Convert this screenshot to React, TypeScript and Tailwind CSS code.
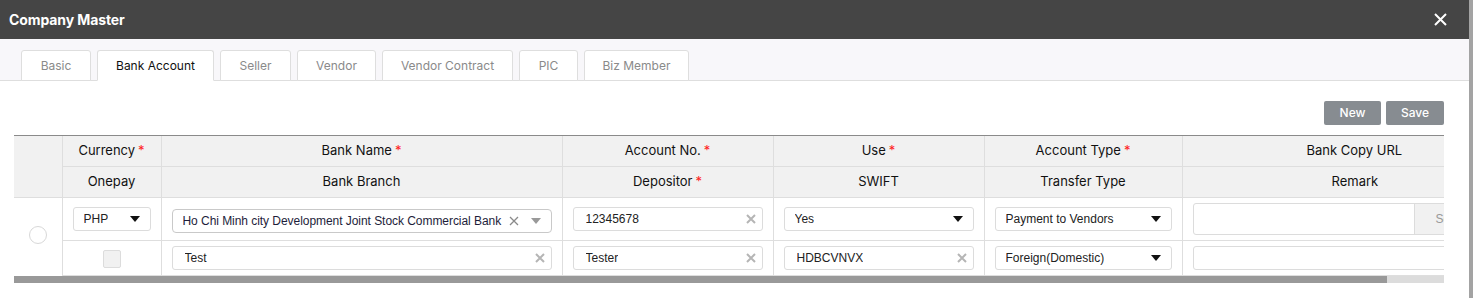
import React from "react";

const tabs = [
  { label: "Basic", w: "w-[70px]" },
  { label: "Bank Account", w: "w-[117px]", active: true },
  { label: "Seller", w: "w-[71px]" },
  { label: "Vendor", w: "w-[79px]" },
  { label: "Vendor Contract", w: "w-[131px]" },
  { label: "PIC", w: "w-[59px]" },
  { label: "Biz Member", w: "w-[105px]" },
];

function Req() {
  return <span className="text-[#ff2020] ml-[3px]">*</span>;
}

function Caret({ gray }: { gray?: boolean }) {
  return (
    <svg width="10" height="6" viewBox="0 0 10 6" className="shrink-0">
      <path d="M0 0h10L5 6z" fill={gray ? "#999" : "#111"} />
    </svg>
  );
}

function Clear({ thin }: { thin?: boolean }) {
  return (
    <svg width="10" height="10" viewBox="0 0 10 10" className="shrink-0">
      <path
        d="M1 1l8 8M9 1l-8 8"
        stroke={thin ? "#8a8a8a" : "#b5b5b5"}
        strokeWidth={thin ? 1.3 : 2}
      />
    </svg>
  );
}

function SelectBox({ value, cls = "" }: { value: string; cls?: string }) {
  return (
    <div
      className={`flex items-center justify-between h-[24px] border border-[#dcdcdc] rounded-[3px] bg-white pl-[10px] pr-[10px] ${cls}`}
    >
      <span className="truncate">{value}</span>
      <Caret />
    </div>
  );
}

function TextBox({ value }: { value: string }) {
  return (
    <div className="flex items-center justify-between h-[24px] border border-[#dcdcdc] rounded-[3px] bg-white pl-[12px] pr-[6px]">
      <span className="truncate">{value}</span>
      <Clear />
    </div>
  );
}

export default function App() {
  return (
    <div className="flex w-[1473px] h-[298px] bg-white overflow-hidden">
      <div className="flex-1 flex flex-col min-w-0">
        {/* title bar */}
        <div className="h-[39px] bg-[#454545] flex items-center justify-between pl-[9px] pr-[22px]">
          <h1 className="text-white font-bold text-[14px] font-['Inter',sans-serif] tracking-[-0.1px]">
            Company Master
          </h1>
          <svg width="13" height="13" viewBox="0 0 13 13">
            <path d="M1 1l11 11M12 1L1 12" stroke="#fff" strokeWidth="2" />
          </svg>
        </div>

        {/* tabs */}
        <div className="h-[42px] bg-[#f8f7fa] border-b border-[#dedede] flex items-end gap-[6px] pl-[21px]">
          {tabs.map((t) => (
            <div
              key={t.label}
              className={`${t.w} h-[31px] -mb-px flex items-center justify-center rounded-t-[3px] border border-[#dedede] bg-white text-[12px] font-['Inter',sans-serif] ${
                t.active ? "text-[#111] border-b-white" : "text-[#8a8a8a] border-b-[#dedede]"
              }`}
            >
              {t.label}
            </div>
          ))}
        </div>

        <div className="flex-1 pl-[14px] pr-[25px] pt-[20px]">
          <div className="flex justify-end gap-[5px] h-[24px] mb-[10px]">
            <button className="w-[57px] rounded-[2px] bg-[#878c91] text-white text-[12px] font-medium font-['Inter',sans-serif]">
              New
            </button>
            <button className="w-[58px] rounded-[2px] bg-[#878c91] text-white text-[12px] font-medium font-['Inter',sans-serif]">
              Save
            </button>
          </div>

          <div className="overflow-hidden border-t border-[#8a8a8a]">
            <table className="table-fixed border-collapse w-[1530px] text-[12px] font-['Liberation_Sans',Arial,sans-serif] text-[#222]">
              <colgroup>
                <col className="w-[48px]" />
                <col className="w-[99px]" />
                <col className="w-[401px]" />
                <col className="w-[211px]" />
                <col className="w-[211px]" />
                <col className="w-[198px]" />
                <col className="w-[362px]" />
              </colgroup>
              <thead className="bg-[#f1f1f1] text-[13px] font-['Inter',sans-serif] text-[#111]">
                <tr className="h-[30px]">
                  <th rowSpan={2} className="border-b border-r border-[#dedede] font-normal"></th>
                  <th className="border border-t-0 border-[#dedede] font-normal">Currency<Req /></th>
                  <th className="border border-t-0 border-[#dedede] font-normal">Bank Name<Req /></th>
                  <th className="border border-t-0 border-[#dedede] font-normal">Account No.<Req /></th>
                  <th className="border border-t-0 border-[#dedede] font-normal">Use<Req /></th>
                  <th className="border border-t-0 border-[#dedede] font-normal">Account Type<Req /></th>
                  <th className="border border-t-0 border-[#dedede] font-normal text-left pl-[124px]">Bank Copy URL</th>
                </tr>
                <tr className="h-[31px]">
                  <th className="border border-[#dedede] font-normal">Onepay</th>
                  <th className="border border-[#dedede] font-normal">Bank Branch</th>
                  <th className="border border-[#dedede] font-normal">Depositor<Req /></th>
                  <th className="border border-[#dedede] font-normal">SWIFT</th>
                  <th className="border border-[#dedede] font-normal">Transfer Type</th>
                  <th className="border border-[#dedede] font-normal text-left pl-[149px]">Remark</th>
                </tr>
              </thead>
              <tbody>
                <tr className="h-[43px]">
                  <td rowSpan={2} className="border-r border-[#dedede] text-center align-middle pt-[2px]">
                    <span className="inline-block w-[18px] h-[18px] rounded-full border border-[#d8d8d8] bg-white" />
                  </td>
                  <td className="border border-[#dedede] px-[10px]">
                    <SelectBox value="PHP" />
                  </td>
                  <td className="border border-[#dedede] px-[10px] pt-[4px]">
                    <div className="flex items-center h-[24px] border border-[#c9c9c9] rounded-[4px] bg-white pl-[10px] pr-[10px]">
                      <span className="flex-1 min-w-0 overflow-hidden whitespace-nowrap text-[#1d1d3a] tracking-[-0.05px]">
                        Ho Chi Minh city Development Joint Stock Commercial Bank
                      </span>
                      <span className="ml-[4px] mr-[12px] flex">
                        <Clear thin />
                      </span>
                      <Caret gray />
                    </div>
                  </td>
                  <td className="border border-[#dedede] px-[10px]">
                    <TextBox value="12345678" />
                  </td>
                  <td className="border border-[#dedede] px-[10px]">
                    <SelectBox value="Yes" />
                  </td>
                  <td className="border border-[#dedede] px-[10px]">
                    <SelectBox value="Payment to Vendors" />
                  </td>
                  <td className="border border-[#dedede] pl-[10px]">
                    <div className="flex h-[32px] border border-[#dcdcdc] rounded-[3px] bg-white overflow-hidden">
                      <div className="w-[220px]" />
                      <div className="flex-1 bg-[#f1f1f1] border-l border-[#dcdcdc] text-[#999] flex items-center pl-[21px]">
                        Search
                      </div>
                    </div>
                  </td>
                </tr>
                <tr className="h-[35px]">
                  <td className="border border-[#dedede] text-center">
                    <span className="inline-block w-[18px] h-[18px] mt-[2px] rounded-[2px] border border-[#dcdcdc] bg-[#f1f1f1] align-middle" />
                  </td>
                  <td className="border border-[#dedede] px-[10px]">
                    <TextBox value="Test" />
                  </td>
                  <td className="border border-[#dedede] px-[10px]">
                    <TextBox value="Tester" />
                  </td>
                  <td className="border border-[#dedede] px-[10px]">
                    <TextBox value="HDBCVNVX" />
                  </td>
                  <td className="border border-[#dedede] px-[10px]">
                    <SelectBox value="Foreign(Domestic)" />
                  </td>
                  <td className="border border-[#dedede] pl-[10px]">
                    <div className="h-[24px] border border-[#dcdcdc] rounded-[3px] bg-white" />
                  </td>
                </tr>
              </tbody>
            </table>
            {/* horizontal scrollbar */}
            <div className="flex h-[7px]">
              <div className="w-[1373px] bg-[#999]" />
              <div className="flex-1 bg-[#dcdcdc]" />
            </div>
          </div>
        </div>
      </div>
      {/* vertical scrollbar */}
      <div className="w-[4px] bg-[#a3a3a3]" />
    </div>
  );
}
